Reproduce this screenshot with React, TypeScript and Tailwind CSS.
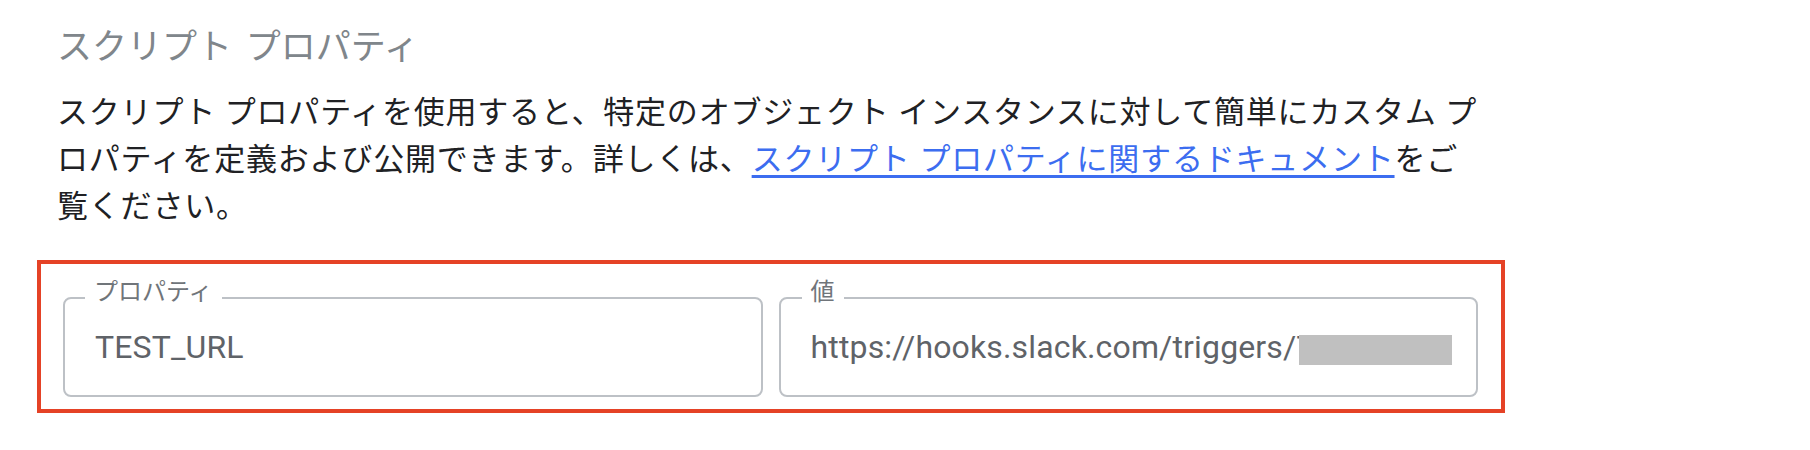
export default function App() {
  return (
    <div className="w-[1810px] h-[450px] bg-white pt-[22px] pl-[37px] font-['Noto_Sans_CJK_JP',sans-serif]">
      <div className="pl-[20px]">
        <h2 className="text-[35px] leading-[44px] font-normal text-[#80868b] [word-spacing:6px] whitespace-nowrap">
          スクリプト プロパティ
        </h2>
        <p className="mt-[20px] text-[31px] leading-[47px] tracking-[0.8px] text-[#202124] whitespace-nowrap [word-spacing:1px]">
          スクリプト プロパティを使用すると、特定のオブジェクト インスタンスに対して簡単にカスタム プ
          <br />
          ロパティを定義および公開できます。詳しくは、
          <a
            href="#"
            className="text-[#3c6df0] underline decoration-[3px] underline-offset-[5px]"
          >
            スクリプト プロパティに関するドキュメント
          </a>
          をご
          <br />
          覧ください。
        </p>
      </div>
      <div className="mt-[33px] w-[1468px] border-[4px] border-[#e54226] pt-[33px] pb-[12px] pl-[22px] pr-[23px]">
        <div className="grid grid-cols-2 gap-[16px]">
          <div className="relative h-[100px] rounded-[8px] border-[2px] border-[#bdc1c6] flex items-center pl-[30px]">
            <span className="absolute left-[20px] top-[-21px] bg-white px-[9px] text-[24px] leading-[24px] text-[#70757a] whitespace-nowrap">
              プロパティ
            </span>
            <span className="font-[Roboto,sans-serif] text-[32px] leading-[40px] tracking-[0.15px] text-[#5f6368] whitespace-nowrap">
              TEST_URL
            </span>
          </div>
          <div className="relative h-[100px] rounded-[8px] border-[2px] border-[#bdc1c6] flex items-center pl-[30px]">
            <span className="absolute left-[21px] top-[-21px] bg-white px-[9px] text-[24px] leading-[24px] text-[#70757a] whitespace-nowrap">
              値
            </span>
            <span className="font-[Roboto,sans-serif] text-[32px] leading-[40px] tracking-[0.15px] text-[#5f6368] whitespace-nowrap">
              https://hooks.slack.com/triggers/T
              <span className="inline-block w-[153px] h-[30px] bg-[#c0c0c0] align-[-7px] -ml-[17px] relative"></span>
            </span>
          </div>
        </div>
      </div>
    </div>
  );
}
